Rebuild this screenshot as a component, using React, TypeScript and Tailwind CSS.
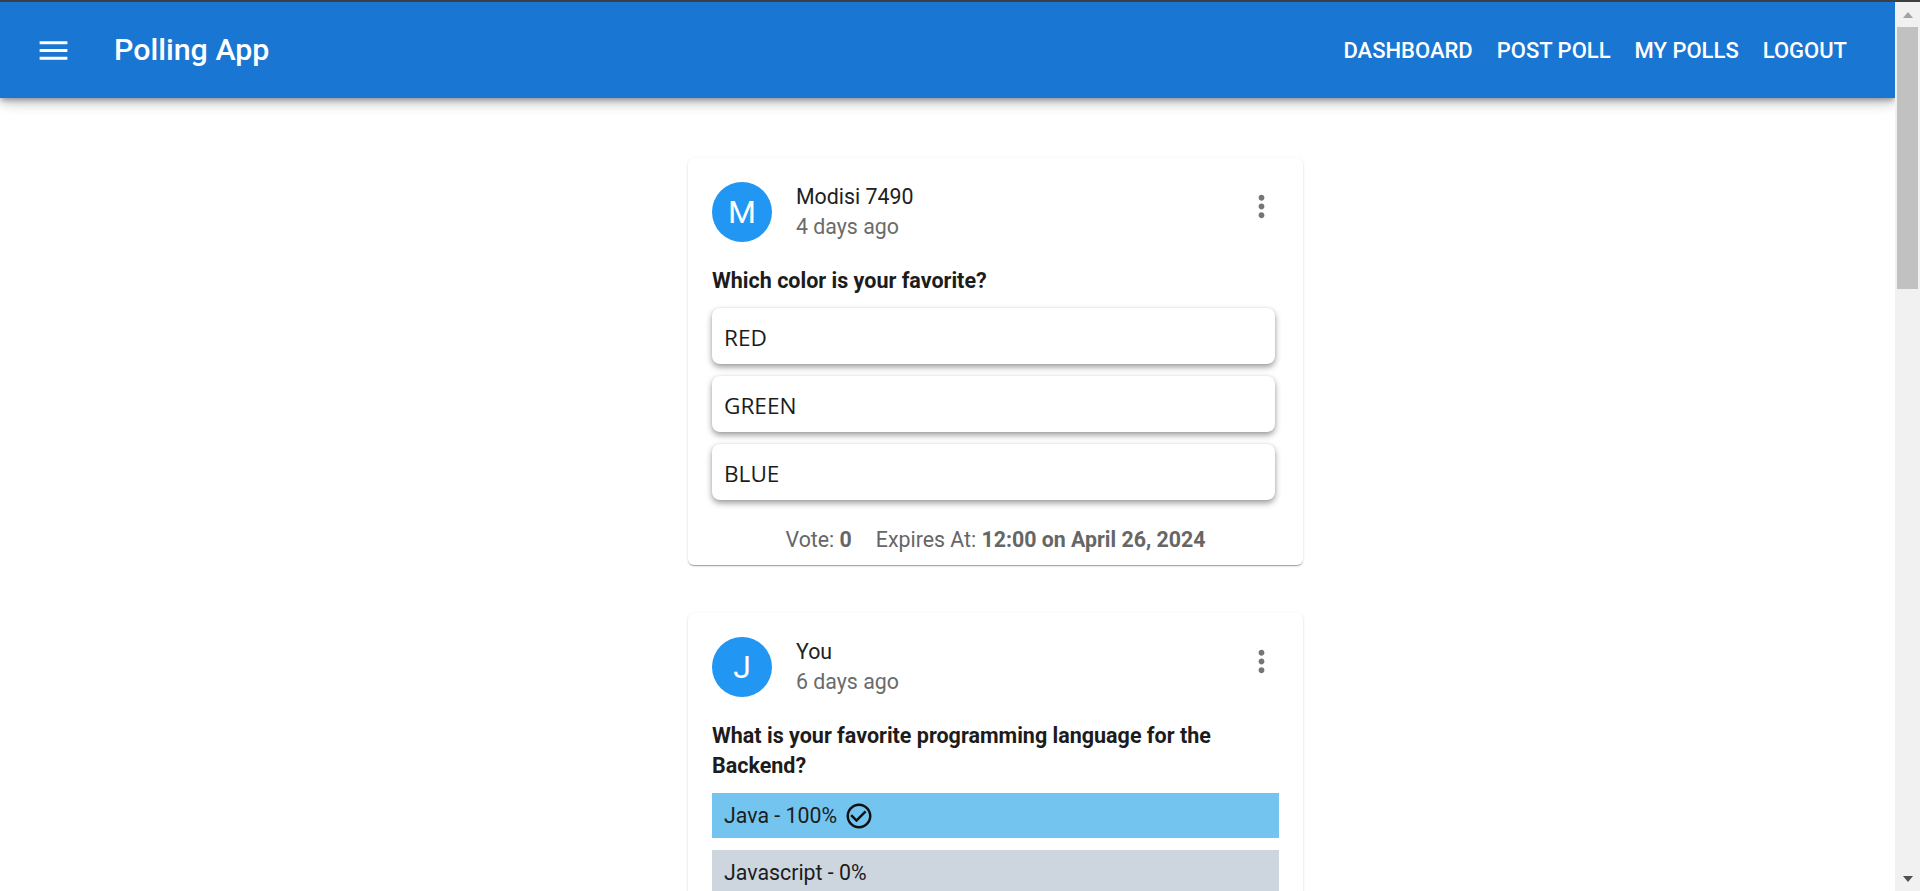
import React from "react";

const MenuIcon = () => (
  <svg viewBox="0 0 24 24" className="w-[37px] h-[37px] fill-white"><path d="M3 18h18v-2H3v2zm0-5h18v-2H3v2zm0-7v2h18V6H3z" /></svg>
);
const MoreIcon = () => (
  <svg viewBox="0 0 24 24" className="w-[35px] h-[35px] fill-[#757575]"><path d="M12 8c1.1 0 2-.9 2-2s-.9-2-2-2-2 .9-2 2 .9 2 2 2zm0 2c-1.1 0-2 .9-2 2s.9 2 2 2 2-.9 2-2-.9-2-2-2zm0 6c-1.1 0-2 .9-2 2s.9 2 2 2 2-.9 2-2-.9-2-2-2z" /></svg>
);
const CheckIcon = () => (
  <svg viewBox="0 0 24 24" className="w-[30px] h-[30px] fill-[#111]"><path d="M16.59 7.58 10 14.17l-3.59-3.58L5 12l5 5 8-8zM12 2C6.48 2 2 6.48 2 12s4.48 10 10 10 10-4.48 10-10S17.52 2 12 2zm0 18c-4.42 0-8-3.58-8-8s3.58-8 8-8 8 3.58 8 8-3.58 8-8 8z" /></svg>
);

function PollHead({ letter, name, when }: { letter: string; name: string; when: string }) {
  return (
    <div className="flex items-start">
      <div className="w-[60px] h-[60px] rounded-full bg-[#2196f3] text-white flex items-center justify-center text-[32px]">{letter}</div>
      <div className="ml-6 flex-1">
        <div className="text-[21.33px] leading-[30px] text-[#212121]">{name}</div>
        <div className="text-[21.33px] leading-[30px] text-[#6b6b6b]">{when}</div>
      </div>
      <div className="mt-[7px]"><MoreIcon /></div>
    </div>
  );
}

export default function App() {
  return (
    <div className="h-[891px] overflow-hidden flex flex-col bg-white font-['Roboto',sans-serif]">
      <div className="h-[2px] bg-[#3c4043] shrink-0" />
      <div className="flex flex-1 min-h-0">
        <div className="flex-1 min-w-0 relative overflow-hidden">
          <header className="relative z-10 h-[96px] bg-[#1976d2] flex items-center pl-[35px] pr-[48px] text-white shadow-[0_3px_5px_-1px_rgba(0,0,0,0.3),0_6px_10px_0_rgba(0,0,0,0.14),0_1px_18px_0_rgba(0,0,0,0.12)]">
            <MenuIcon />
            <div className="ml-[42px] text-[30.4px] font-medium flex-1">Polling App</div>
            <nav className="flex gap-[24px] text-[22px] font-medium">
              <span>DASHBOARD</span>
              <span>POST POLL</span>
              <span>MY POLLS</span>
              <span>LOGOUT</span>
            </nav>
          </header>
          <main className="flex flex-col items-center pl-[96px] pt-[60px] gap-[48px]">
            <section className="w-[615px] shrink-0 rounded-[6px] bg-white px-6 pt-[24px] pb-[10px] shadow-[0_2px_1px_-1px_rgba(0,0,0,0.2),0_1px_1px_0_rgba(0,0,0,0.14),0_1px_3px_0_rgba(0,0,0,0.12)]">
              <PollHead letter="M" name="Modisi 7490" when="4 days ago" />
              <div className="mt-[24px] text-[21.5px] leading-[30px] font-bold text-[#1c1c1c]">Which color is your favorite?</div>
              <div className="mt-[12px] flex flex-col gap-3 w-[563px]">
                {["RED", "GREEN", "BLUE"].map((o) => (
                  <div key={o} className="h-[56px] rounded-lg bg-white flex items-center px-3 pt-[4px] text-[22.6px] font-['Open_Sans',sans-serif] text-[#1c1c1c] shadow-[0_3px_6px_rgba(0,0,0,0.4),0_0_3px_rgba(0,0,0,0.05)]">{o}</div>
                ))}
              </div>
              <div className="mt-[25px] text-center text-[21.33px] leading-[30px] text-[#666]">
                Vote: <b>0</b><span className="inline-block w-[24px]" />Expires At: <b>12:00 on April 26, 2024</b>
              </div>
            </section>
            <section className="w-[615px] shrink-0 rounded-[6px] bg-white px-6 pt-[24px] pb-[8px] shadow-[0_2px_1px_-1px_rgba(0,0,0,0.2),0_1px_1px_0_rgba(0,0,0,0.14),0_1px_3px_0_rgba(0,0,0,0.12)]">
              <PollHead letter="J" name="You" when="6 days ago" />
              <div className="mt-[24px] text-[21.5px] leading-[30px] font-bold text-[#1c1c1c]">What is your favorite programming language for the Backend?</div>
              <div className="mt-[12px] flex flex-col gap-3">
                <div className="h-[45px] bg-[#73c5f0] flex items-center px-3 text-[21.33px] text-[#1c1c1c]">Java - 100%<span className="ml-[7px] flex"><CheckIcon /></span></div>
                <div className="h-[45px] bg-[#cdd6df] flex items-center px-3 text-[21.33px] text-[#1c1c1c]">Javascript - 0%</div>
              </div>
            </section>
          </main>
        </div>
        <div className="w-[25px] shrink-0 bg-[#f1f1f1] flex flex-col items-center">
          <div className="h-[25px] flex items-center justify-center"><div className="w-0 h-0 border-x-[5.5px] border-x-transparent border-b-[6px] border-b-[#a3a3a3]" /></div>
          <div className="w-[21px] h-[262px] bg-[#c1c1c1]" />
          <div className="flex-1" />
          <div className="h-[25px] flex items-center justify-center"><div className="w-0 h-0 border-x-[5.5px] border-x-transparent border-t-[6px] border-t-[#505050]" /></div>
        </div>
      </div>
    </div>
  );
}
